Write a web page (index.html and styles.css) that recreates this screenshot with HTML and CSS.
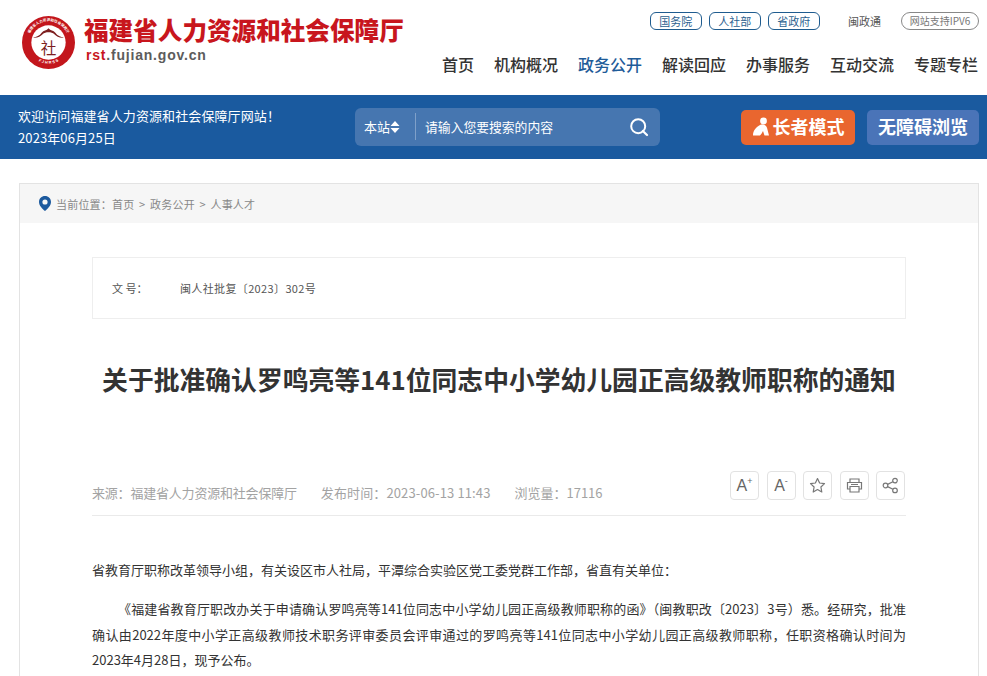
FILE: index.html
```html
<!DOCTYPE html>
<html lang="zh-CN">
<head>
<meta charset="utf-8">
<title>关于批准确认罗鸣亮等141位同志中小学幼儿园正高级教师职称的通知</title>
<link rel="stylesheet" href="styles.css">
</head>
<body>
<header class="top">
  <div class="brand">
    <svg class="logo" width="53" height="53" viewBox="0 0 54 54">
      <defs>
        <path id="arcTop" d="M7.8 33 A20.5 20.5 0 1 1 46.2 33"/>
        <path id="arcBot" d="M10 40 A21 21 0 0 0 44 40"/>
      </defs>
      <circle cx="27" cy="27" r="27" fill="#c3161c"/>
      <circle cx="27" cy="27" r="17.5" fill="#fff"/>
      <text class="logo-ring"><textPath href="#arcTop" startOffset="50%" text-anchor="middle">福建省人力资源和社会保障厅</textPath></text>
      <text class="logo-en"><textPath href="#arcBot" startOffset="50%" text-anchor="middle">F J H R S S</textPath></text>
      <path d="M11 22 C15 21.5 18 20 20 17 C22 14.5 25 15 27 12.5 C29 15 32 14.5 34 17 C36 20 39 21.5 43 22 C38 22.5 35 20.5 33 18.5 C30 16 24 16 21 18.5 C19 20.5 16 22.5 11 22Z" fill="#7d1f1f"/>
      <text class="logo-char" x="27" y="39" text-anchor="middle">社</text>
    </svg>
    <div class="brand-text">
      <div class="brand-name">福建省人力资源和社会保障厅</div>
      <div class="brand-url"><span class="brand-url-red">rst</span>.fujian.gov.cn</div>
    </div>
  </div>
  <div class="top-right">
    <div class="links">
      <a class="pill">国务院</a>
      <a class="pill">人社部</a>
      <a class="pill">省政府</a>
      <a class="plain">闽政通</a>
      <a class="pill pill-grey">网站支持IPV6</a>
    </div>
    <nav class="nav">
      <a>首页</a><a>机构概况</a><a class="active">政务公开</a><a>解读回应</a><a>办事服务</a><a>互动交流</a><a>专题专栏</a>
    </nav>
  </div>
</header>

<section class="bar">
  <div class="welcome">
    <div>欢迎访问福建省人力资源和社会保障厅网站！</div>
    <div>2023年06月25日</div>
  </div>
  <div class="search">
    <span class="scope">本站<svg width="10" height="12" viewBox="0 0 10 12"><path d="M5 0 L9.5 5 H.5Z M5 12 L9.5 7 H.5Z" fill="#fff"/></svg></span>
    <span class="placeholder">请输入您要搜索的内容</span>
    <svg class="search-icon" width="20" height="20" viewBox="0 0 20 20"><circle cx="9.2" cy="9.2" r="7" fill="none" stroke="#fff" stroke-width="2"/><path d="M13.8 14 L18 18" stroke="#fff" stroke-width="2.2" stroke-linecap="round"/></svg>
  </div>
  <a class="mode mode-elder">
    <svg width="18" height="19" viewBox="0 0 18 19"><circle cx="11.5" cy="4" r="3.4" fill="#fff"/><path d="M8 8 C11 7 14 8 15 10.8 L17 18.5 H12.5 L11 14 C10 16 9 17.5 8 18.5 H1 C1 14 3.5 10.5 8 8Z" fill="#fff"/></svg>
    <span>长者模式</span>
  </a>
  <a class="mode mode-access">无障碍浏览</a>
</section>

<main class="panel">
  <div class="crumbs">
    <svg width="12" height="15" viewBox="0 0 12 15"><path fill-rule="evenodd" d="M6 0 C9.4 0 12 2.6 12 5.9 C12 9.6 8.5 12.8 6 15 C3.5 12.8 0 9.6 0 5.9 C0 2.6 2.6 0 6 0Z M6 3.4 A2.6 2.6 0 1 0 6 8.6 A2.6 2.6 0 1 0 6 3.4Z" fill="#1d5a9e"/></svg>
    <span>当前位置：首页 &gt; 政务公开 &gt; 人事人才</span>
  </div>
  <article class="article">
    <div class="docno"><span class="docno-label">文 号：</span><span class="docno-value">闽人社批复〔2023〕302号</span></div>
    <h1 class="title">关于批准确认罗鸣亮等141位同志中小学幼儿园正高级教师职称的通知</h1>
    <div class="meta">
      <div class="meta-text">
        <span class="meta-source">来源：福建省人力资源和社会保障厅</span>
        <span class="meta-date">发布时间：2023-06-13 11:43</span>
        <span>浏览量：17116</span>
      </div>
      <div class="tools">
        <a class="tool">A<sup>+</sup></a>
        <a class="tool">A<sup>-</sup></a>
        <a class="tool"><svg width="17" height="17" viewBox="0 0 17 17"><path d="M8.5 1.5 L10.6 6 L15.5 6.6 L11.9 10 L12.8 15 L8.5 12.5 L4.2 15 L5.1 10 L1.5 6.6 L6.4 6Z" fill="none" stroke="#777" stroke-width="1.2" stroke-linejoin="round"/></svg></a>
        <a class="tool"><svg width="17" height="17" viewBox="0 0 17 17"><path d="M4 5 V2 H13 V5 M4 12 H1.5 V5.5 H15.5 V12 H13 M4 9.5 H13 V15 H4Z M5 7.5 H12" fill="none" stroke="#777" stroke-width="1.2"/></svg></a>
        <a class="tool"><svg width="17" height="17" viewBox="0 0 17 17"><g fill="none" stroke="#777" stroke-width="1.2"><circle cx="3.5" cy="8.5" r="2.3"/><circle cx="13" cy="3.6" r="2.3"/><circle cx="13" cy="13.4" r="2.3"/><path d="M5.6 7.4 L10.9 4.7 M5.6 9.6 L10.9 12.3"/></g></svg></a>
      </div>
    </div>
    <div class="content">
      <p>省教育厅职称改革领导小组，有关设区市人社局，平潭综合实验区党工委党群工作部，省直有关单位：</p>
      <p class="indent">《福建省教育厅职改办关于申请确认罗鸣亮等141位同志中小学幼儿园正高级教师职称的函》（闽教职改〔2023〕3号）悉。经研究，批准确认由2022年度中小学正高级教师技术职务评审委员会评审通过的罗鸣亮等141位同志中小学幼儿园正高级教师职称，任职资格确认时间为2023年4月28日，现予公布。</p>
    </div>
  </article>
</main>
</body>
</html>
```

FILE: styles.css
```css
* { box-sizing: border-box; }
html, body { margin: 0; height: 676px; overflow: hidden; }
body {
  background: #fff;
  color: #333;
  font-family: "Noto Sans CJK SC", "Liberation Sans", sans-serif;
}
a { color: inherit; text-decoration: none; }

.top {
  height: 95px;
  display: flex;
  justify-content: space-between;
  padding: 12px 8px 0 22px;
}
.brand { display: flex; gap: 9px; align-items: flex-start; padding-top: 4px; }
.logo-ring { font-size: 3.6px; font-weight: 700; fill: #fff; letter-spacing: .1px; }
.logo-en { font: 700 4px "Liberation Sans", sans-serif; fill: #fff; }
.logo-char { font-size: 16px; font-weight: 400; fill: #7d1f1f; }
.brand-text { margin-top: -2px; }
.brand-name {
  color: #c8161d;
  font-size: 24.6px;
  font-weight: 900;
  line-height: 30px;
  white-space: nowrap;
}
.brand-url {
  color: #5c5c5c;
  font: 700 14px/20px "Liberation Sans", sans-serif;
  letter-spacing: .8px;
  margin: 1px 0 0 2px;
}
.brand-url-red { color: #c8161d; }

.top-right { display: flex; flex-direction: column; align-items: flex-end; }
.links { display: flex; align-items: center; height: 18px; font-size: 11px; }
.pill {
  height: 18px;
  width: 52.5px;
  margin-right: 6.5px;
  border: 1px solid #1f5c8f;
  border-radius: 6px;
  color: #2d5f8f;
  line-height: 16px;
  text-align: center;
}
.pill:nth-child(3) { margin-right: 28px; }
.plain { color: #555; margin-right: 19px; width: 34px; }
.pill-grey {
  width: 78px;
  margin-right: 0;
  border-color: #888;
  border-radius: 9px;
  color: #777;
  font-size: 10px;
}
.nav {
  display: flex;
  gap: 20px;
  margin-top: 22px;
  margin-right: 1px;
  font-size: 16px;
  font-weight: 500;
  line-height: 24px;
  color: #333;
}
.nav .active { color: #1f5c99; }

.bar {
  height: 64px;
  background: #1a5a9f;
  display: flex;
  align-items: center;
  padding: 0 8px 0 18px;
  color: #fff;
}
.welcome { width: 337px; font-size: 13px; line-height: 22px; letter-spacing: .1px; }
.search {
  width: 305px;
  height: 38px;
  background: #4676b0;
  border-radius: 6px;
  display: flex;
  align-items: center;
  font-size: 13px;
  padding: 0 11px 1px 9px;
  margin-right: 81px;
}
.scope {
  width: 52px;
  height: 27px;
  display: flex;
  align-items: center;
  border-right: 1px solid #7fa0c9;
  margin-right: 9px;
}
.placeholder { flex: 1; font-size: 12.8px; }
.mode {
  height: 35px;
  padding-bottom: 2px;
  border-radius: 5px;
  display: flex;
  align-items: center;
  justify-content: center;
  font-size: 18px;
  font-weight: 700;
  color: #fff;
}
.mode-elder { width: 114px; background: #e9662f; margin-right: 12px; gap: 3px; }
.mode-access { width: 112px; background: #4a74b8; }

.panel {
  margin: 24px 8px 0 19px;
  height: 520px;
  border: 1px solid #e3e3e3;
  border-bottom: 0;
}
.crumbs {
  height: 39px;
  background: #f6f6f6;
  display: flex;
  align-items: center;
  gap: 5px;
  padding-left: 19px;
  font-size: 11px;
  letter-spacing: .2px;
  word-spacing: 2px;
  color: #888;
}
.article { padding: 34px 72px 0; }
.docno {
  height: 62px;
  border: 1px solid #eee;
  display: flex;
  align-items: center;
  padding-left: 19px;
  font-size: 11px;
  color: #555;
}
.docno-label { width: 68px; }
.docno-value { letter-spacing: .36px; }
.title {
  margin: 40px 0 0;
  font-size: 25.8px;
  font-weight: 700;
  line-height: 40px;
  text-align: center;
  color: #333;
  white-space: nowrap;
}
.meta {
  margin-top: 72px;
  height: 45px;
  padding-bottom: 15px;
  border-bottom: 1px solid #eaeaea;
  display: flex;
  justify-content: space-between;
  align-items: flex-end;
}
.meta-text { display: flex; gap: 24px; font-size: 13px; color: #a3a3a3; line-height: 16px; margin-bottom: -1px; }
.meta-source { letter-spacing: -.2px; }
.meta-date { letter-spacing: .12px; }
.tools { display: flex; gap: 7.5px; margin-right: 1px; }
.tool {
  width: 29px;
  height: 29px;
  border: 1px solid #e2e2e2;
  border-radius: 4px;
  display: flex;
  align-items: center;
  justify-content: center;
  font: 16px/1 "Liberation Sans", sans-serif;
  color: #666;
}
.tool sup { font-size: 9px; line-height: 0; margin-top: -9px; }
.content { margin-top: 41px; font-size: 13px; line-height: 25.5px; color: #333; }
.content p { margin: 0 0 13.5px; text-align: justify; }
.indent { text-indent: 2em; }
```
